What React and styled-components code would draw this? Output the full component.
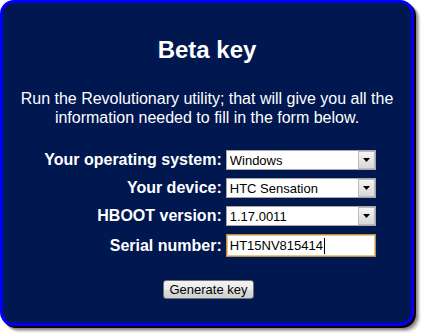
import styled, { createGlobalStyle } from "styled-components";

const GlobalStyle = createGlobalStyle`
  html, body {
    margin: 0;
    padding: 0;
    background: #ffffff;
  }
  body {
    font-family: "Liberation Sans", Arial, sans-serif;
  }
`;

const Page = styled.div`
  width: 421px;
  height: 333px;
  padding: 0 7px 7px 0;
  box-sizing: border-box;
`;

const Panel = styled.div`
  width: 100%;
  height: 100%;
  box-sizing: border-box;
  border: 3px solid #0000ff;
  border-radius: 14px;
  background: #00174f;
  color: #ffffff;
  box-shadow: 2px 2px 0 #1a0000, 4px 4px 2px #8c8c8c, 6px 6px 2px #d8d8d8;
  display: flex;
  flex-direction: column;
  align-items: center;
  padding-top: 33px;
`;

const Title = styled.h1`
  margin: 0;
  font-size: 24px;
  font-weight: bold;
  line-height: 28px;
`;

const Intro = styled.p`
  margin: 25px 0 0;
  font-size: 16px;
  line-height: 19px;
  text-align: center;
  width: 380px;
`;

const Form = styled.div`
  margin-top: 23px;
  display: grid;
  grid-template-columns: auto 150px;
  column-gap: 4px;
  row-gap: 8px;
  align-items: center;
  margin-left: 6px;
`;

const Label = styled.label`
  font-size: 16px;
  font-weight: bold;
  text-align: right;
  white-space: nowrap;
`;

const SelectWrap = styled.div`
  position: relative;
  height: 20px;
`;

const Select = styled.select`
  appearance: none;
  width: 100%;
  height: 20px;
  box-sizing: border-box;
  border: 1px solid #a5a5a5;
  border-radius: 0;
  background: #ffffff;
  color: #000000;
  font-family: "Liberation Sans", Arial, sans-serif;
  font-size: 13px;
  padding: 0 0 0 3px;
  outline: none;
`;

const Arrow = styled.span`
  position: absolute;
  right: 1px;
  top: 1px;
  width: 17px;
  height: 18px;
  box-sizing: border-box;
  background: linear-gradient(#f4f4f4, #d8d8d8);
  border: 1px solid #bcbcbc;
  display: flex;
  align-items: center;
  justify-content: center;
  pointer-events: none;
`;

const Field = styled.div`
  height: 23px;
  box-sizing: border-box;
  border: 1px solid #b8904a;
  box-shadow: inset 0 0 0 1px #e6c88c;
  background: #ffffff;
  color: #000000;
  font-size: 13px;
  display: flex;
  align-items: center;
  padding-left: 3px;
`;

const Caret = styled.span`
  display: inline-block;
  width: 1px;
  height: 16px;
  background: #000000;
  margin-left: 1px;
`;

const Button = styled.button`
  margin-top: 23px;
  margin-left: 3px;
  width: 91px;
  height: 19px;
  padding: 0;
  border: 1px solid #707070;
  border-radius: 3px;
  background: linear-gradient(#f2f2f2 0%, #ebebeb 50%, #dddddd 51%, #cfcfcf 100%);
  color: #000000;
  font-family: "Liberation Sans", Arial, sans-serif;
  font-size: 13px;
  line-height: 17px;
`;

function DropArrow() {
  return (
    <svg width="7" height="4" viewBox="0 0 7 4">
      <path d="M0 0h7L3.5 4z" fill="#000" />
    </svg>
  );
}

function Dropdown({ value }) {
  return (
    <SelectWrap>
      <Select defaultValue={value}>
        <option>{value}</option>
      </Select>
      <Arrow>
        <DropArrow />
      </Arrow>
    </SelectWrap>
  );
}

export default function App() {
  return (
    <Page>
      <GlobalStyle />
      <Panel>
        <Title>Beta key</Title>
        <Intro>
          Run the Revolutionary utility; that will give you all the information
          needed to fill in the form below.
        </Intro>
        <Form>
          <Label>Your operating system:</Label>
          <Dropdown value="Windows" />
          <Label>Your device:</Label>
          <Dropdown value="HTC Sensation" />
          <Label>HBOOT version:</Label>
          <Dropdown value="1.17.0011" />
          <Label>Serial number:</Label>
          <Field>
            HT15NV815414
            <Caret />
          </Field>
        </Form>
        <Button>Generate key</Button>
      </Panel>
    </Page>
  );
}
